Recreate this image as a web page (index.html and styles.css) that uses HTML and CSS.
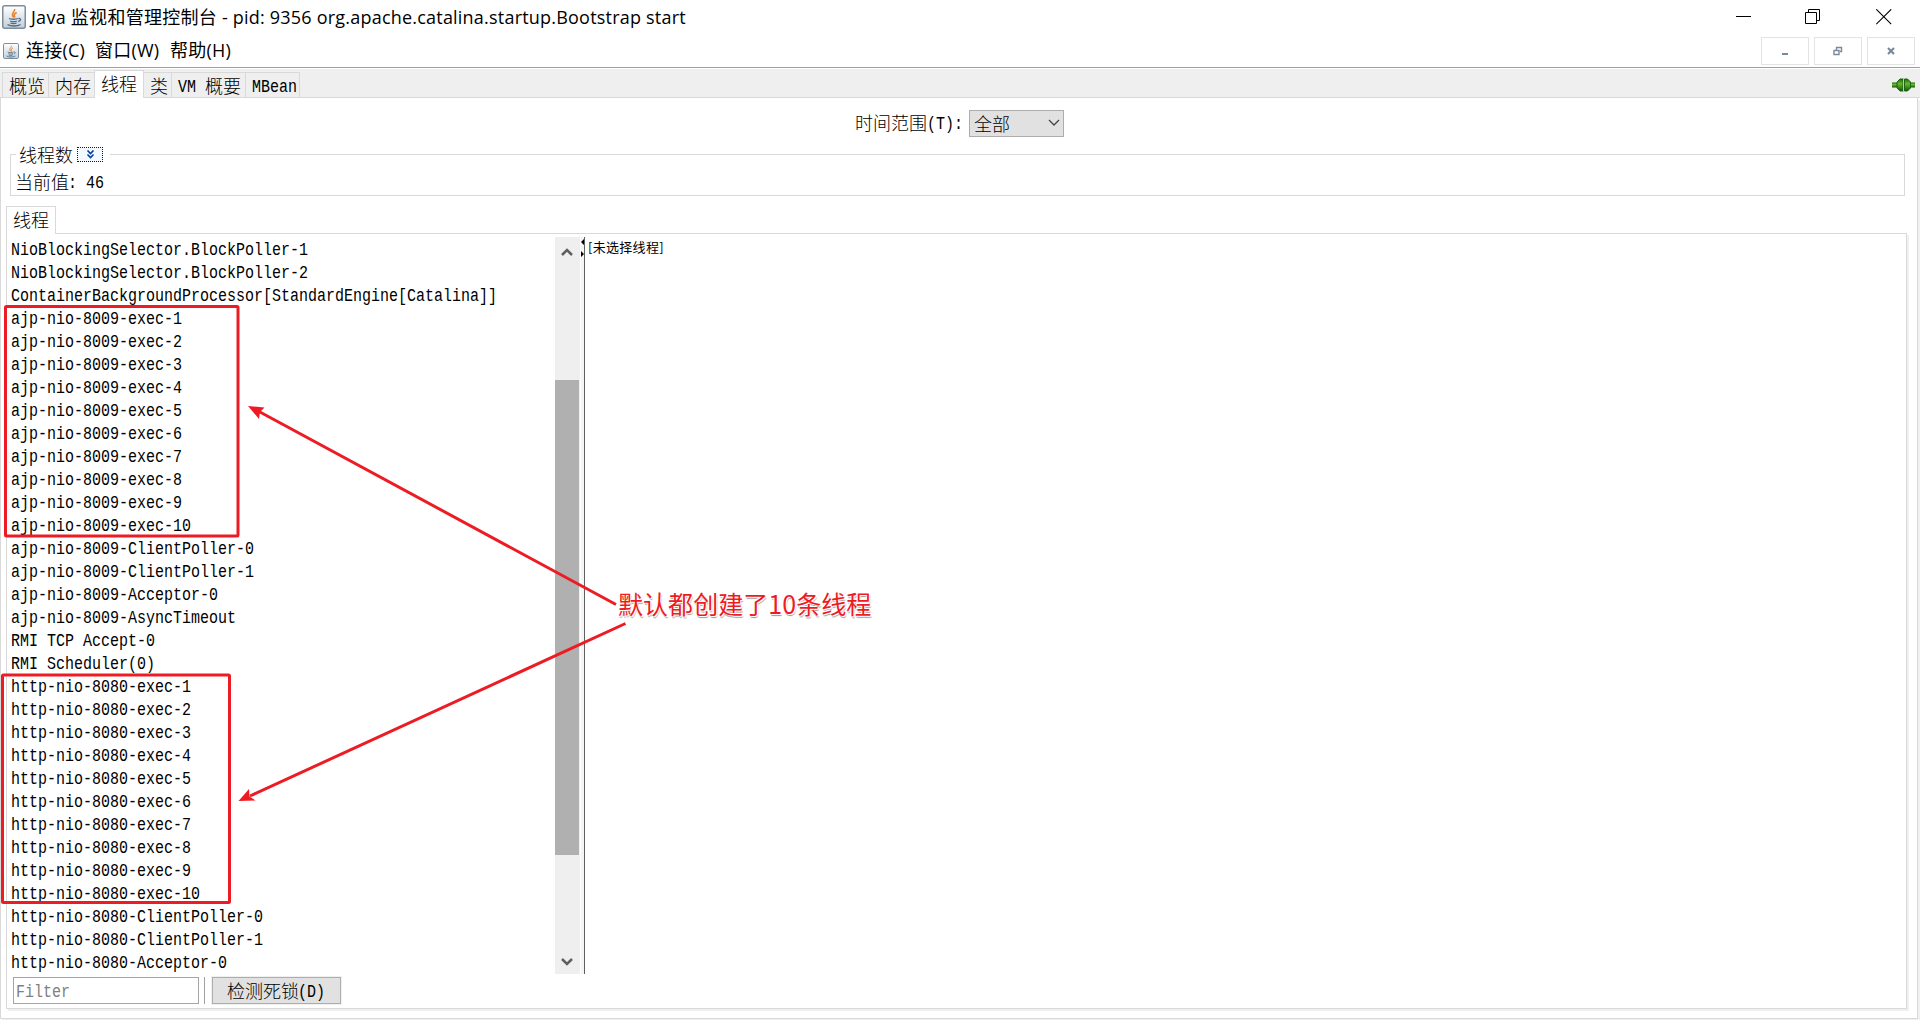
FILE: index.html
```html
<!DOCTYPE html>
<html lang="zh-CN">
<head>
<meta charset="utf-8">
<title>Java 监视和管理控制台</title>
<link rel="stylesheet" href="styles.css">
</head>
<body>
<svg width="0" height="0" class="defs">
  <defs>
    <linearGradient id="tile" x1="0" y1="0" x2="0" y2="1"><stop offset="0" stop-color="#fff"/><stop offset="1" stop-color="#c3ced8"/></linearGradient>
    <linearGradient id="plug" x1="0" y1="0" x2="0" y2="1"><stop offset="0" stop-color="#1f6b12"/><stop offset=".4" stop-color="#67b92c"/><stop offset="1" stop-color="#15540c"/></linearGradient>
    <symbol id="java" viewBox="0 0 24 24">
      <rect x=".75" y=".75" width="22.5" height="22.5" rx="2" fill="url(#tile)" stroke="#7d8e9d" stroke-width="1.5"/>
      <path d="M12.6 4c1 3-4.800 4-1 8.500M14.700 7.500c-3 1.500-3 2.500-1.700 5" fill="none" stroke="#ed8023" stroke-width="1.500"/>
      <path d="M7 13.500c2 1 7 1 9 0M8 16c2 .8 5 .8 7 0M8.500 18.200c2 .6 4 .6 6 0M5.500 19.500c3 2 10 2 13 0M16.500 13.500c3-.5 2.500 2.500-.3 3" fill="none" stroke="#4c6c8c" stroke-width="1.300"/>
    </symbol>
  </defs>
</svg>
<div class="window">
  <header class="titlebar">
    <svg class="app-icon"><use href="#java"/></svg>
    <h1 class="title"><span class="t1">Java 监视和管理控制台</span><span class="t2"> - pid: 9356 org.apache.catalina.startup.Bootstrap start</span></h1>
    <div class="controls">
      <svg width="16" height="16"><path d="M0 7.500h15" stroke="#000"/></svg>
      <svg width="16" height="16"><path d="M.5 3.500h11v11H.5zM3.500 3.500v-3h11v11h-3" fill="none" stroke="#000"/></svg>
      <svg width="16" height="16"><path d="M.3.300l14.900 14.900M15.200.300L.3 15.200" fill="none" stroke="#000" stroke-width="1.100"/></svg>
    </div>
  </header>
  <nav class="menubar">
    <svg class="menu-icon"><use href="#java"/></svg>
    <span class="menu m1">连接(C)</span><span class="menu m2">窗口(W)</span><span class="menu m3">帮助(H)</span>
    <div class="mdi">
      <span class="mdi-btn"><svg width="10" height="10"><path d="M2 7h6v2H2z" fill="#7b8a9b"/></svg></span>
      <span class="mdi-btn"><svg width="10" height="10"><path d="M1 4.500h5v4H1zM3.500 4V1.500h5v4H7" fill="none" stroke="#7b8a9b" stroke-width="1.400"/></svg></span>
      <span class="mdi-btn"><svg width="10" height="10"><path d="M2 2l6 6M8 2L2 8" stroke="#7b8a9b" stroke-width="2.200"/></svg></span>
    </div>
  </nav>
  <div class="tabbar">
    <div class="tab w1">概览</div><div class="tab w1">内存</div><div class="tab active">线程</div><div class="tab w3">类</div><div class="tab w4"><span class="en vm">VM</span>概要</div><div class="tab w5"><span class="en mb">MBean</span></div>
    <svg class="plug" width="24" height="14"><path d="M0 4.500h6v5H0zM17 4.500h6v5h-6z" fill="url(#plug)"/><path d="M8 1h3v12H8L5 10V4zM12.500 1h3l3 3v6l-3 3h-3z" fill="url(#plug)" stroke="#1d6510"/><path d="M11.500 0v14" stroke="#a6df80"/></svg>
  </div>
  <main class="page">
    <div class="range">
      <span class="range-label">时间范围<span class="en rt">(T):</span></span>
      <span class="combo">全部<svg width="12" height="8"><path d="M1 1l5 5 5-5" fill="none" stroke="#444" stroke-width="1.300"/></svg></span>
    </div>
    <section class="group">
      <div class="legend">线程数<span class="expand"><svg width="9" height="9"><path d="M1.500.500l3 3 3-3M1.500 4.500l3 3 3-3" fill="none" stroke="#003ca5" stroke-width="1.600"/></svg></span></div>
      <div class="current">当前值<span class="en cv">: 46</span></div>
    </section>
    <div class="subtab">线程</div>
    <section class="pane">
      <div class="split">
        <ul class="threads">
          <li>NioBlockingSelector.BlockPoller-1</li><li>NioBlockingSelector.BlockPoller-2</li><li>ContainerBackgroundProcessor[StandardEngine[Catalina]]</li>
          <li>ajp-nio-8009-exec-1</li><li>ajp-nio-8009-exec-2</li><li>ajp-nio-8009-exec-3</li><li>ajp-nio-8009-exec-4</li><li>ajp-nio-8009-exec-5</li><li>ajp-nio-8009-exec-6</li><li>ajp-nio-8009-exec-7</li><li>ajp-nio-8009-exec-8</li><li>ajp-nio-8009-exec-9</li><li>ajp-nio-8009-exec-10</li>
          <li>ajp-nio-8009-ClientPoller-0</li><li>ajp-nio-8009-ClientPoller-1</li><li>ajp-nio-8009-Acceptor-0</li><li>ajp-nio-8009-AsyncTimeout</li><li>RMI TCP Accept-0</li><li>RMI Scheduler(0)</li>
          <li>http-nio-8080-exec-1</li><li>http-nio-8080-exec-2</li><li>http-nio-8080-exec-3</li><li>http-nio-8080-exec-4</li><li>http-nio-8080-exec-5</li><li>http-nio-8080-exec-6</li><li>http-nio-8080-exec-7</li><li>http-nio-8080-exec-8</li><li>http-nio-8080-exec-9</li><li>http-nio-8080-exec-10</li>
          <li>http-nio-8080-ClientPoller-0</li><li>http-nio-8080-ClientPoller-1</li><li>http-nio-8080-Acceptor-0</li>
        </ul>
        <div class="scroll">
          <svg width="12" height="10"><path d="M1 8l5-5 5 5" fill="none" stroke="#606060" stroke-width="2.500"/></svg>
          <div class="thumb"></div>
          <svg width="12" height="10"><path d="M1 2l5 5 5-5" fill="none" stroke="#606060" stroke-width="2.500"/></svg>
        </div>
        <div class="divider"><svg width="3" height="18"><path d="M3 0v6L0 3zM0 12v6l3-3z" fill="#000"/></svg></div>
        <div class="detail">[未选择线程]</div>
      </div>
      <div class="bottom">
        <div class="filter"><span class="en">Filter</span></div>
        <div class="sep"></div>
        <div class="button">检测死锁<span class="en dd">(D)</span></div>
      </div>
    </section>
  </main>
  <svg class="notes" width="1920" height="1020">
    <g fill="none" stroke="#ed1c24" stroke-width="3">
      <rect x="5.500" y="306.500" width="232.500" height="229.500" rx="1"/>
      <rect x="2.500" y="675" width="227" height="227.500" rx="1"/>
      <path d="M616 604.500L259 411.500M625.500 623.500L250 796"/>
    </g>
    <path d="M248 406l16.500 1.500-4.500 4.500-1 7zM238.500 801l10.500-12 .5 7.500 6 4z" fill="#ed1c24"/>
  </svg>
  <div class="callout">默认都创建了10条线程</div>
</div>
</body>
</html>
```
FILE: styles.css
```css
* { box-sizing: border-box; }
body { margin: 0; background: #fff; color: #000; font: 300 18px/22px "Noto Sans CJK SC", sans-serif; }
.defs { position: absolute; }
.window { position: relative; width: 1920px; height: 1020px; display: flex; flex-direction: column; overflow: hidden; white-space: nowrap; }
.en { display: inline-block; font-family: "Liberation Mono", monospace; font-size: 18px; white-space: pre; transform: translateY(-1px) scaleX(.8333); transform-origin: 0 50%; }

.titlebar { height: 34px; flex: none; display: flex; align-items: center; padding: 0 28px 0 2px; }
.app-icon { width: 24px; height: 24px; }
.title { margin: 0 0 0 5px; font: 18px/24px "Open Sans", "Noto Sans CJK SC", sans-serif; flex: 1; }
.t1 { letter-spacing: .27px; }
.t2 { letter-spacing: .21px; white-space: pre; }
.controls { display: flex; gap: 54px; }
.controls svg:nth-child(2) { margin: 0 1px 0 -1px; }

.menubar { height: 33px; flex: none; display: flex; align-items: center; padding: 0 5px 0 3px; font: 18px/24px "Open Sans", "Noto Sans CJK SC", sans-serif; }
.menu-icon { width: 16px; height: 16px; margin-right: 7px; }
.m1 { width: 69px; }
.m2 { width: 75px; }
.menu { margin-top: -2px; letter-spacing: .2px; }
.mdi { margin-left: auto; display: flex; gap: 5px; }
.mdi-btn { width: 48px; height: 28px; border: 1px solid #e3e3e3; display: flex; align-items: center; justify-content: center; }

.tabbar { height: 31px; flex: none; background: #efefef; border-top: 1px solid #a0a0a0; box-shadow: inset 0 1px #fff, inset 0 -1px #d9d9d9; display: flex; align-items: flex-end; padding-left: 2px; }
.tab { height: 26px; border: 1px solid #d9d9d9; border-right: 0; padding-left: 6px; line-height: 24px; }
.w1 { width: 46px; }
.active { width: 50px; height: 28px; background: #fff; border-right: 1px solid #d9d9d9; border-bottom: 0; padding-left: 6px; }
.w3 { width: 27px; border-left: 0; }
.w4 { width: 74px; }
.w5 { width: 55px; border-right: 1px solid #d9d9d9; }
.vm { width: 27px; }
.mb { width: 45px; }
.plug { margin: 0 4px 6px auto; }

.page { width: 1918px; height: 921px; flex: none; border: 1px solid #d9d9d9; border-top: 0; padding: 12px 10px 0 5px; box-shadow: 2px 2px #f0f0f0; }
.range { height: 27px; display: flex; align-items: center; padding-left: 849px; }
.range-label { width: 114px; padding-bottom: 1px; }
.rt { width: 36px; }
.combo { width: 95px; height: 27px; border: 1px solid #adadad; background: #e1e1e1; display: flex; align-items: center; justify-content: space-between; padding: 0 3px 2px 4px; }
.group { margin: 17px 2px 0 4px; height: 42px; border: 1px solid #d9d9d9; }
.legend { width: 94px; height: 22px; margin: -12px 0 0 5px; padding-left: 3px; background: #fff; display: flex; align-items: center; gap: 4px; }
.expand { width: 26px; height: 15px; border: 1px dotted #001a4d; background: #f4f8ff; display: flex; align-items: center; justify-content: center; }
.current { height: 30px; padding: 5px 0 0 4px; }
.cv { width: 45px; margin-left: -1px; }
.subtab { position: relative; width: 50px; height: 28px; margin-top: 10px; border: 1px solid #d9d9d9; border-bottom: 0; background: #fff; padding: 1px 0 0 6px; z-index: 1; }
.pane { height: 776px; margin-top: -1px; border: 1px solid #d9d9d9; box-shadow: 2px 2px #f0f0f0; padding-top: 3px; }
.split { display: flex; height: 737px; }
.threads { width: 548px; height: 737px; margin: 0; padding: 2px 0 0 4px; list-style: none; }
.threads li { height: 23px; font: 18px/23px "Liberation Mono", monospace; width: max-content; transform: scaleX(.8333); transform-origin: 0 50%; }
.scroll { width: 25px; background: #efefef; display: flex; flex-direction: column; padding: 10px 0 7px; }
.scroll svg { margin-left: 6px; }
.thumb { width: 24px; height: 475px; margin: 123px 0 auto; background: #b0b0b0; }
.divider { width: 5px; border-right: 1px solid #606060; border-left: 1px solid #fff; background: #f5f5f5; padding-top: 2px; }
.divider svg { display: block; }
.detail { padding: 1px 0 0 3px; font-size: 13px; line-height: 18px; font-weight: 400; letter-spacing: .3px; }
.bottom { display: flex; padding: 3px 0 0 6px; }
.filter { width: 186px; height: 27px; border: 1px solid #a5a5a5; padding: 1px 0 0 2px; color: #808080; }
.sep { width: 1px; height: 27px; margin: 0 7px 0 5px; background: #a0a0a0; }
.button { width: 129px; height: 27px; border: 1px solid #adadad; background: #e1e1e1; box-shadow: 0 0 0 1px #f0f0f0; line-height: 24px; padding-left: 14px; }
.dd { width: 27px; margin-left: -1px; }

.notes { position: absolute; left: 0; top: 0; z-index: 2; }
.callout { position: absolute; left: 618px; top: 585px; z-index: 3; color: #ed1c24; font-size: 25px; font-weight: 400; line-height: 36px; letter-spacing: .05px; text-shadow: -1px -1px #fff, 1px 1px #fff, 1px 2px 1px #999; }
```
